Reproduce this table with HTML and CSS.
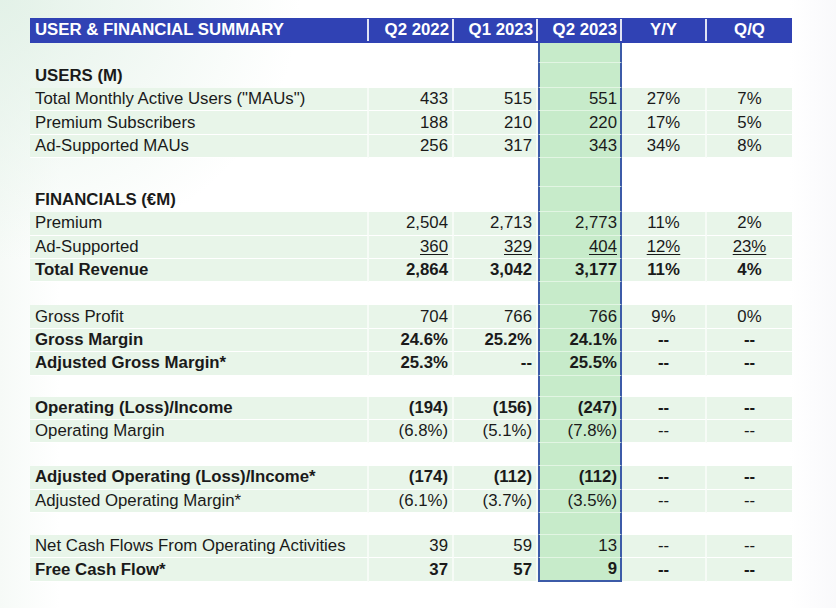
FILE: index.html
```html
<!DOCTYPE html>
<html>
<head>
<meta charset="utf-8">
<link rel="stylesheet" href="styles.css">
</head>
<body>
<div class="page">
  <div class="summary">
    <div class="row head">
      <div class="c lbl">USER &amp; FINANCIAL SUMMARY</div>
      <div class="c num">Q2 2022</div>
      <div class="c num">Q1 2023</div>
      <div class="c num">Q2 2023</div>
      <div class="c ctr">Y/Y</div>
      <div class="c ctr last">Q/Q</div>
    </div>

    <div class="row blank b20"><div class="c"></div><div class="c"></div><div class="c"></div><div class="c hl"></div><div class="c"></div><div class="c"></div></div>
    <div class="row sect"><div class="c lbl">USERS (M)</div><div class="c"></div><div class="c"></div><div class="c hl"></div><div class="c"></div><div class="c"></div></div>
    <div class="row data"><div class="c lbl">Total Monthly Active Users ("MAUs")</div><div class="c num">433</div><div class="c num">515</div><div class="c num hl">551</div><div class="c ctr">27%</div><div class="c ctr">7%</div></div>
    <div class="row data"><div class="c lbl">Premium Subscribers</div><div class="c num">188</div><div class="c num">210</div><div class="c num hl">220</div><div class="c ctr">17%</div><div class="c ctr">5%</div></div>
    <div class="row data"><div class="c lbl">Ad-Supported MAUs</div><div class="c num">256</div><div class="c num">317</div><div class="c num hl">343</div><div class="c ctr">34%</div><div class="c ctr">8%</div></div>

    <div class="row blank b29"><div class="c"></div><div class="c"></div><div class="c"></div><div class="c hl"></div><div class="c"></div><div class="c"></div></div>
    <div class="row sect"><div class="c lbl">FINANCIALS (€M)</div><div class="c"></div><div class="c"></div><div class="c hl"></div><div class="c"></div><div class="c"></div></div>
    <div class="row data"><div class="c lbl">Premium</div><div class="c num">2,504</div><div class="c num">2,713</div><div class="c num hl">2,773</div><div class="c ctr">11%</div><div class="c ctr">2%</div></div>
    <div class="row data ul"><div class="c lbl">Ad-Supported</div><div class="c num"><u>360</u></div><div class="c num"><u>329</u></div><div class="c num hl"><u>404</u></div><div class="c ctr"><u>12%</u></div><div class="c ctr"><u>23%</u></div></div>
    <div class="row data bold"><div class="c lbl">Total Revenue</div><div class="c num">2,864</div><div class="c num">3,042</div><div class="c num hl">3,177</div><div class="c ctr">11%</div><div class="c ctr">4%</div></div>

    <div class="row blank b23"><div class="c"></div><div class="c"></div><div class="c"></div><div class="c hl"></div><div class="c"></div><div class="c"></div></div>
    <div class="row data"><div class="c lbl">Gross Profit</div><div class="c num">704</div><div class="c num">766</div><div class="c num hl">766</div><div class="c ctr">9%</div><div class="c ctr">0%</div></div>
    <div class="row data bold"><div class="c lbl">Gross Margin</div><div class="c num">24.6%</div><div class="c num">25.2%</div><div class="c num hl">24.1%</div><div class="c ctr">--</div><div class="c ctr">--</div></div>
    <div class="row data bold"><div class="c lbl">Adjusted Gross Margin*</div><div class="c num">25.3%</div><div class="c num">--</div><div class="c num hl">25.5%</div><div class="c ctr">--</div><div class="c ctr">--</div></div>

    <div class="row blank b21"><div class="c"></div><div class="c"></div><div class="c"></div><div class="c hl"></div><div class="c"></div><div class="c"></div></div>
    <div class="row data bold"><div class="c lbl">Operating (Loss)/Income</div><div class="c num">(194)</div><div class="c num">(156)</div><div class="c num hl">(247)</div><div class="c ctr">--</div><div class="c ctr">--</div></div>
    <div class="row data"><div class="c lbl">Operating Margin</div><div class="c num">(6.8%)</div><div class="c num">(5.1%)</div><div class="c num hl">(7.8%)</div><div class="c ctr">--</div><div class="c ctr">--</div></div>

    <div class="row blank b23"><div class="c"></div><div class="c"></div><div class="c"></div><div class="c hl"></div><div class="c"></div><div class="c"></div></div>
    <div class="row data bold"><div class="c lbl">Adjusted Operating (Loss)/Income*</div><div class="c num">(174)</div><div class="c num">(112)</div><div class="c num hl">(112)</div><div class="c ctr">--</div><div class="c ctr">--</div></div>
    <div class="row data"><div class="c lbl">Adjusted Operating Margin*</div><div class="c num">(6.1%)</div><div class="c num">(3.7%)</div><div class="c num hl">(3.5%)</div><div class="c ctr">--</div><div class="c ctr">--</div></div>

    <div class="row blank b22"><div class="c"></div><div class="c"></div><div class="c"></div><div class="c hl"></div><div class="c"></div><div class="c"></div></div>
    <div class="row data"><div class="c lbl">Net Cash Flows From Operating Activities</div><div class="c num">39</div><div class="c num">59</div><div class="c num hl">13</div><div class="c ctr">--</div><div class="c ctr">--</div></div>
    <div class="row data bold endrow"><div class="c lbl">Free Cash Flow*</div><div class="c num">37</div><div class="c num">57</div><div class="c num hl">9</div><div class="c ctr">--</div><div class="c ctr">--</div></div>
  </div>
</div>
</body>
</html>
```

FILE: styles.css
```css
html, body {
  margin: 0;
  padding: 0;
}
body {
  width: 836px;
  height: 608px;
  overflow: hidden;
  font-family: "Liberation Sans", Arial, sans-serif;
  color: #1a1a1a;
  background:
    radial-gradient(ellipse 300px 260px at 0 0, rgba(226, 241, 231, 0.95), rgba(255, 255, 255, 0) 100%),
    linear-gradient(to right, #f6faf7 0, #ffffff 60px, #ffffff 790px, #f9f9fb 836px);
}
.page {
  padding: 18px 0 0 30px;
}
.summary {
  width: 762px;
  display: flex;
  flex-direction: column;
}
.row {
  display: grid;
  grid-template-columns: 339px 85px 84px 84px 85px 85px;
  font-size: 16.8px;
}
.c {
  box-sizing: border-box;
  display: flex;
  align-items: center;
  white-space: nowrap;
}
.lbl { padding-left: 5px; }
.num { justify-content: flex-end; padding-right: 4px; }
.ctr { justify-content: center; }

/* header */
.head {
  height: 25px;
  background: #3042b4;
  color: #ffffff;
  font-weight: bold;
}
.head .c {
  border-right: 2px solid rgba(255, 255, 255, 0.85);
  margin: 1px 0 2px;
  height: 22px;
}
.head .num { padding-right: 3px; }
.head .last { border-right: none; }

/* rows */
.data { height: 23.4px; }
.sect { height: 25px; font-weight: bold; }
.b20 { height: 20px; }
.b21 { height: 21px; }
.b22 { height: 22px; }
.b23 { height: 23px; }
.b29 { height: 29px; }

.data .c {
  background: #e8f5e9;
  border-bottom: 1px solid #ffffff;
  border-right: 2px solid #f6fbf6;
}
.data .c:last-child { border-right: none; }
.bold { font-weight: bold; }
u { text-decoration-thickness: 1px; text-underline-offset: 2px; }

/* highlighted column */
.row .hl,
.data .hl {
  background: #c7ebca;
  border-left: 2px solid #3c5ba8;
  border-right: 2px solid #3c5ba8;
  border-bottom: 1px solid #e2f5e3;
  padding-right: 3px;
}
.endrow .hl {
  border-bottom: 2px solid #3c5ba8;
}
```
